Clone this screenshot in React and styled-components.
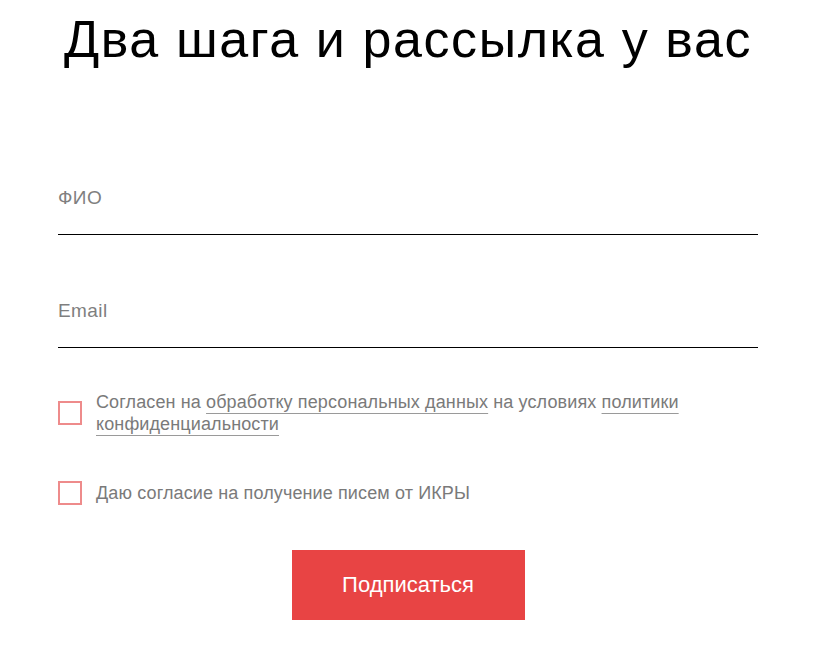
import React from "react";
import styled, { createGlobalStyle } from "styled-components";

const Global = createGlobalStyle`
  html, body { margin: 0; padding: 0; background: #fff; }
  body { font-family: "Liberation Sans", Arial, sans-serif; }
  * { box-sizing: border-box; }
`;

const Form = styled.form`
  width: 700px;
  margin: 0 auto;
  padding-top: 9px;
  display: flex;
  flex-direction: column;
`;

const Title = styled.h1`
  margin: 0;
  font-weight: 400;
  font-size: 52px;
  line-height: 60px;
  letter-spacing: 1.6px;
  color: #000;
  text-align: center;
  white-space: nowrap;
`;

const Field = styled.input`
  display: block;
  width: 100%;
  height: 73px;
  margin-top: ${(p) => p.$mt}px;
  border: none;
  border-bottom: 1px solid #000;
  outline: none;
  padding: 0;
  font-family: inherit;
  font-size: 19px;
  letter-spacing: 0.4px;
  color: #222;
  background: transparent;
  &::placeholder { color: #7f7f7f; }
`;

const Row = styled.label`
  display: flex;
  align-items: center;
  gap: 14px;
  margin-top: ${(p) => p.$mt}px;
  cursor: pointer;
`;

const Box = styled.span`
  flex: none;
  width: 24px;
  height: 24px;
  border: 2px solid #ee8b8b;
  background: #fff;
`;

const Text = styled.span`
  font-size: 18px;
  line-height: 22px;
  letter-spacing: 0.12px;
  color: #7a7a7a;
`;

const Link = styled.a`
  color: #7a7a7a;
  text-decoration: underline;
  text-decoration-color: #9a9a9a;
  text-decoration-thickness: 1px;
  text-underline-offset: 5px;
`;

const Button = styled.button`
  align-self: center;
  margin-top: 45px;
  width: 233px;
  height: 70px;
  border: none;
  background: #e84444;
  color: #fff;
  font-family: inherit;
  font-size: 22px;
  cursor: pointer;
`;

export default function App() {
  return (
    <>
      <Global />
      <Form onSubmit={(e) => e.preventDefault()}>
        <Title>Два шага и рассылка у вас</Title>
        <Field $mt={93} placeholder="ФИО" />
        <Field $mt={40} placeholder="Email" />
        <Row $mt={43}>
          <Box />
          <Text>
            Согласен на <Link href="#">обработку персональных данных</Link> на условиях{" "}
            <Link href="#">политики</Link> <Link href="#">конфиденциальности</Link>
          </Text>
        </Row>
        <Row $mt={46}>
          <Box />
          <Text>Даю согласие на получение писем от ИКРЫ</Text>
        </Row>
        <Button type="submit">Подписаться</Button>
      </Form>
    </>
  );
}
